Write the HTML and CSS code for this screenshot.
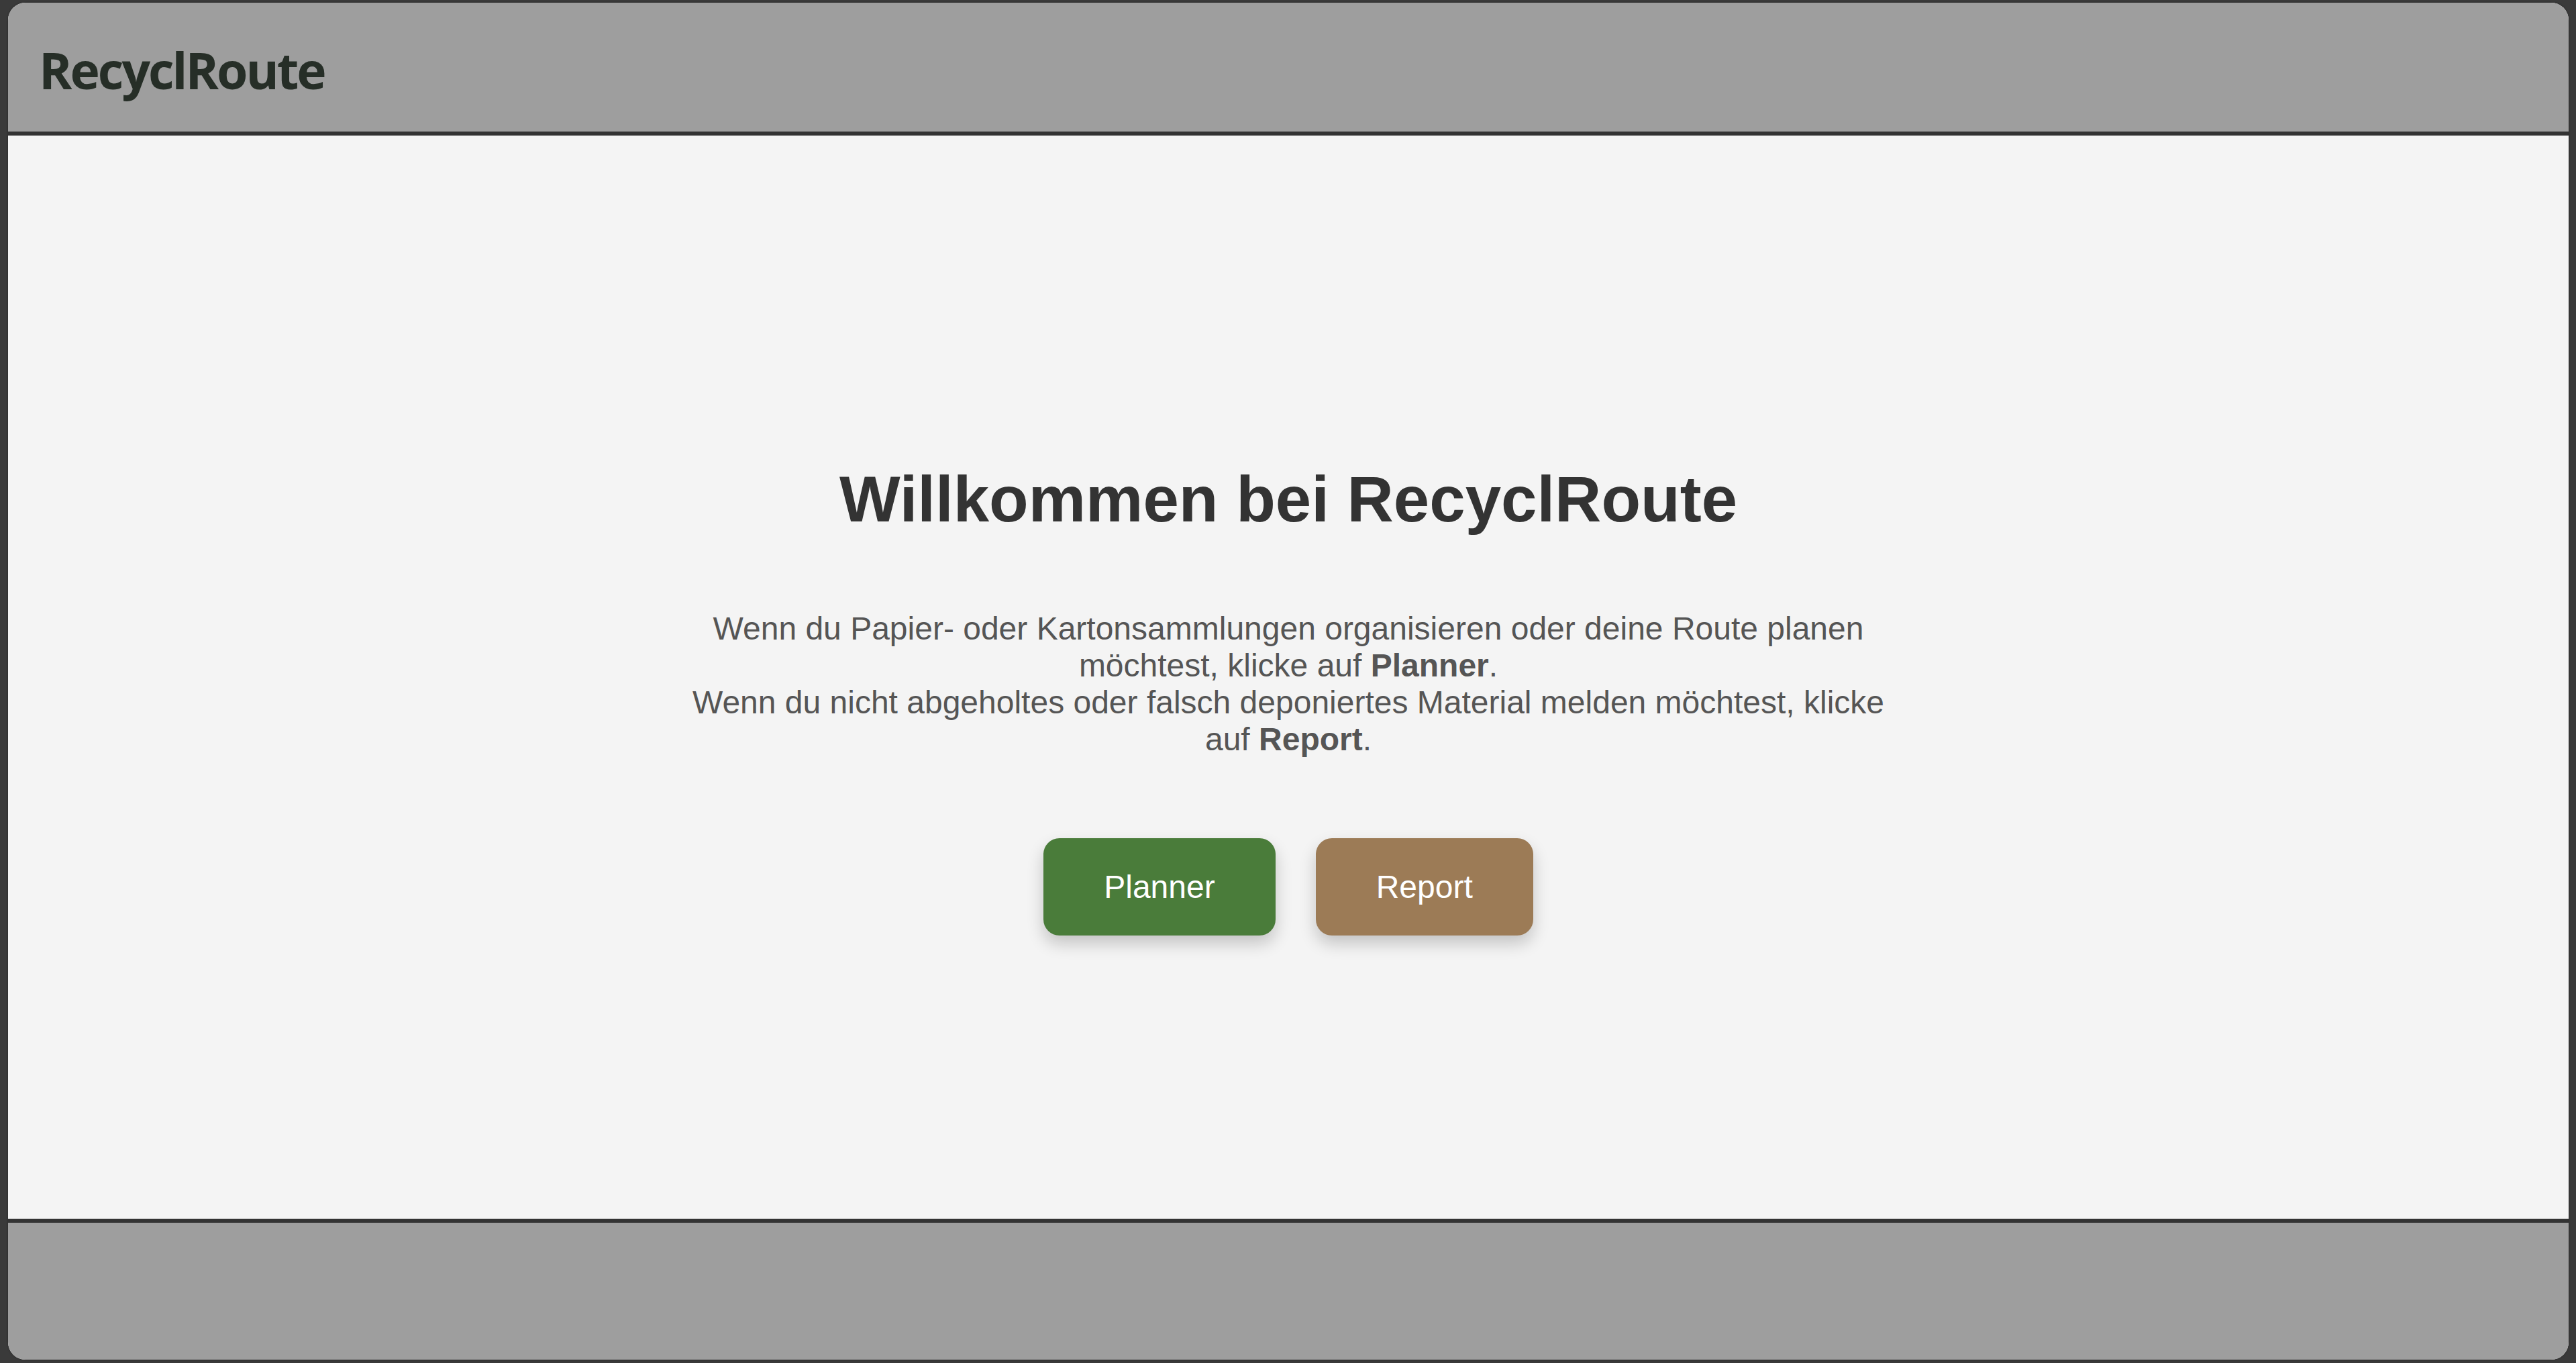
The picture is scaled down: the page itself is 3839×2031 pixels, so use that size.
FILE: index.html
```html
<!DOCTYPE html>
<html lang="de">
<head>
<meta charset="utf-8">
<title>RecyclRoute</title>
<link rel="stylesheet" href="styles.css">
</head>
<body>
<div class="frame">
  <div class="app">
    <header class="topbar">
      <div class="logo">RecyclRoute</div>
    </header>
    <main class="content">
      <h1 class="title">Willkommen bei RecyclRoute</h1>
      <p class="intro">Wenn du Papier- oder Kartonsammlungen organisieren oder deine Route planen möchtest, klicke auf <strong>Planner</strong>.<br>Wenn du nicht abgeholtes oder falsch deponiertes Material melden möchtest, klicke auf <strong>Report</strong>.</p>
      <div class="actions">
        <button class="btn btn-planner" type="button">Planner</button>
        <button class="btn btn-report" type="button">Report</button>
      </div>
    </main>
    <footer class="bottombar"></footer>
  </div>
</div>
</body>
</html>
```

FILE: styles.css
```css
html, body {
  margin: 0;
  padding: 0;
  height: 100%;
}

body {
  background: #3a3a3a;
  font-family: "Liberation Sans", Arial, sans-serif;
}

.frame {
  box-sizing: border-box;
  height: 100vh;
  padding: 4px 11px 5px 12px;
  display: flex;
}

.app {
  flex: 1;
  display: flex;
  flex-direction: column;
  border-radius: 26px;
  overflow: hidden;
  background: #f4f4f4;
  box-shadow: 0 0 3px rgba(0, 0, 0, 0.4);
}

.topbar {
  flex: 0 0 auto;
  height: 192px;
  background: #9e9e9e;
  border-bottom: 6px solid #333333;
  display: flex;
  align-items: center;
  padding-left: 46px;
}

.logo {
  font-family: "Open Sans", "Noto Sans", sans-serif;
  font-weight: 700;
  font-size: 75px;
  color: #262e27;
  letter-spacing: -3px;
  padding-top: 8px;
}

.content {
  flex: 1;
  display: flex;
  flex-direction: column;
  align-items: center;
  justify-content: center;
  background: #f4f4f4;
  text-align: center;
}

.title {
  margin: 64px 0 0;
  font-size: 96px;
  font-weight: 700;
  color: #333333;
  line-height: normal;
}

.intro {
  margin: 110px 0 0;
  max-width: 1800px;
  font-size: 48px;
  line-height: normal;
  color: #555555;
}

.intro strong {
  font-weight: 700;
}

.actions {
  margin-top: 120px;
  display: flex;
  gap: 60px;
}

.btn {
  font-family: "Liberation Sans", Arial, sans-serif;
  font-size: 48px;
  line-height: normal;
  color: #ffffff;
  border: none;
  border-radius: 24px;
  padding: 45px 90px;
  box-shadow: 0 12px 24px rgba(0, 0, 0, 0.2);
  cursor: pointer;
}

.btn-planner {
  background: #4a7c3a;
}

.btn-report {
  background: #9c7b56;
}

.bottombar {
  flex: 0 0 auto;
  height: 204px;
  background: #9e9e9e;
  border-top: 6px solid #333333;
}
```
